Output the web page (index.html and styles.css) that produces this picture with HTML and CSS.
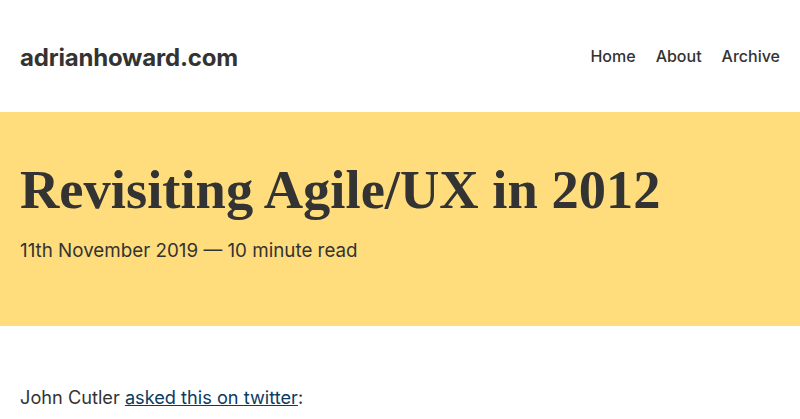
FILE: index.html
```html
<!DOCTYPE html>
<html lang="en">
<head>
<meta charset="utf-8">
<title>Revisiting Agile/UX in 2012</title>
<link rel="stylesheet" href="styles.css">
</head>
<body>
<header class="site-header">
  <a class="site-title" href="#">adrianhoward.com</a>
  <nav class="site-nav">
    <a href="#">Home</a>
    <a href="#">About</a>
    <a href="#">Archive</a>
  </nav>
</header>
<section class="hero">
  <h1 class="post-title">Revisiting Agile/UX in 2012</h1>
  <p class="post-meta">11th November 2019 — 10 minute read</p>
</section>
<main class="content">
  <p>John Cutler <a href="#">asked this on twitter</a>:</p>
</main>
</body>
</html>
```
FILE: styles.css
```css
* { box-sizing: border-box; }
html, body { margin: 0; padding: 0; }
body {
  font-family: Inter, "Liberation Sans", sans-serif;
  color: #333;
  background: #fff;
}
.site-header {
  height: 112px;
  display: flex;
  align-items: center;
  justify-content: space-between;
  padding: 0 20px;
}
.site-title {
  margin-top: 3px;
  font-size: 24px;
  line-height: 29px;
  font-weight: 700;
  color: #333;
  text-decoration: none;
  letter-spacing: -0.2px;
}
.site-nav {
  display: flex;
  gap: 20px;
}
.site-nav a {
  font-size: 16px;
  font-weight: 550;
  color: #333;
  text-decoration: none;
}
.hero {
  background: #ffdd7c;
  height: 214px;
  padding: 46px 20px 0;
}
.post-title {
  margin: 0;
  font-family: "Liberation Serif", serif;
  font-weight: 700;
  font-size: 54.5px;
  line-height: 64px;
}
.post-meta {
  margin: 16px 0 0;
  font-size: 18.8px;
  line-height: 26px;
}
.content {
  padding: 56px 20px 0;
}
.content p {
  margin: 0;
  font-size: 18.2px;
  line-height: 30px;
}
.content a {
  color: #0d3a5e;
}
```
